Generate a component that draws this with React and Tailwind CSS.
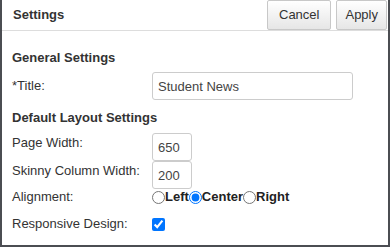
import React from "react";

function Row({ label, children, className = "", labelCls = "" }) {
  return (
    <div className={`flex items-center ${className}`}>
      <div className={`w-[140px] shrink-0 ${labelCls}`}>{label}</div>
      {children}
    </div>
  );
}

function Radio({ checked, label }) {
  return (
    <label className="flex items-center">
      <input type="radio" name="align" defaultChecked={checked} className="m-0 w-[13px] h-[13px] accent-[#0075ff]" />
      <span className="font-bold text-[#222]">{label}</span>
    </label>
  );
}

const inputCls = "h-[28px] border border-[#ccc] rounded-[3px] px-[5px] outline-none text-[#444] text-[13px]";

export default function App() {
  return (
    <div className="w-[390px] h-[247px] bg-white border-l-2 border-r-2 border-b-2 border-[#4b4d52] text-[13px] leading-[16px] text-[#333] font-['Liberation_Sans',Arial,sans-serif]">
      <div className="flex items-center justify-between h-[31px] border-b border-[#ddd] pl-[11px] pr-[1px]">
        <div className="font-bold text-[13px]">Settings</div>
        <div className="flex gap-[5px] self-start">
          <button className="h-[30px] px-[11px] border border-[#c8c8c8] rounded-[2px] bg-gradient-to-b from-white to-[#e6e6e6] text-[#333] text-[13px]">Cancel</button>
          <button className="h-[30px] px-[8px] border border-[#c8c8c8] rounded-[2px] bg-gradient-to-b from-white to-[#e6e6e6] text-[#333] text-[13px]">Apply</button>
        </div>
      </div>
      <div className="pl-[10px] pt-[19px]">
        <div className="font-bold">General Settings</div>
        <Row label="*Title:" className="mt-[6px]">
          <input defaultValue="Student News" className={`w-[201px] ${inputCls}`} />
        </Row>
        <div className="font-bold mt-[10px]">Default Layout Settings</div>
        <Row label="Page Width:" className="mt-[7px]" labelCls="-mt-[9px]">
          <input defaultValue="650" className={`w-[40px] ${inputCls}`} />
        </Row>
        <Row label="Skinny Column Width:" labelCls="-mt-[9px]">
          <input defaultValue="200" className={`w-[40px] ${inputCls}`} />
        </Row>
        <Row label="Alignment:">
          <div className="flex items-center">
            <Radio label="Left" />
            <Radio label="Center" checked />
            <Radio label="Right" />
          </div>
        </Row>
        <Row label="Responsive Design:" className="mt-[11px]">
          <input type="checkbox" defaultChecked className="m-0 w-[13px] h-[13px] accent-[#0075ff]" />
        </Row>
      </div>
    </div>
  );
}
